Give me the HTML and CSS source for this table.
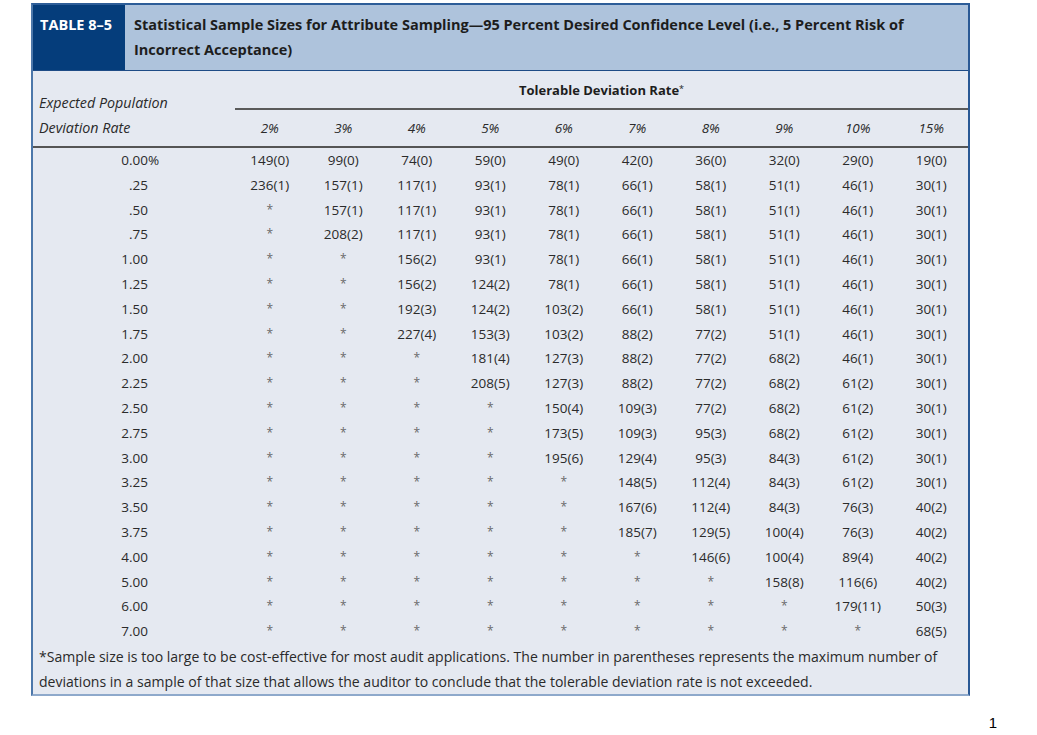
FILE: index.html
```html
<!DOCTYPE html>
<html lang="en">
<head>
<meta charset="utf-8">
<title>Table 8-5</title>
<link rel="stylesheet" href="styles.css">
</head>
<body>
<div class="page">
  <div class="tbl">
    <div class="head">
      <div class="tag">TABLE 8–5</div>
      <div class="title">Statistical Sample Sizes for Attribute Sampling—95 Percent Desired Confidence Level (i.e., 5 Percent Risk of<br>Incorrect Acceptance)</div>
    </div>
    <div class="colhead">
      <div class="rowlabel">Expected Population<br>Deviation Rate</div>
      <div class="tdr">Tolerable Deviation Rate<span class="sup">*</span></div>
      <div class="pct">2%</div><div class="pct">3%</div><div class="pct">4%</div><div class="pct">5%</div><div class="pct">6%</div><div class="pct">7%</div><div class="pct">8%</div><div class="pct">9%</div><div class="pct">10%</div><div class="pct">15%</div>
    </div>
    <div class="rows">
      <div class="row"><span class="rate">0.00<span class="pc">%</span></span><span>149(0)</span><span>99(0)</span><span>74(0)</span><span>59(0)</span><span>49(0)</span><span>42(0)</span><span>36(0)</span><span>32(0)</span><span>29(0)</span><span>19(0)</span></div>
      <div class="row"><span class="rate">.25</span><span>236(1)</span><span>157(1)</span><span>117(1)</span><span>93(1)</span><span>78(1)</span><span>66(1)</span><span>58(1)</span><span>51(1)</span><span>46(1)</span><span>30(1)</span></div>
      <div class="row"><span class="rate">.50</span><span class="ast">*</span><span>157(1)</span><span>117(1)</span><span>93(1)</span><span>78(1)</span><span>66(1)</span><span>58(1)</span><span>51(1)</span><span>46(1)</span><span>30(1)</span></div>
      <div class="row"><span class="rate">.75</span><span class="ast">*</span><span>208(2)</span><span>117(1)</span><span>93(1)</span><span>78(1)</span><span>66(1)</span><span>58(1)</span><span>51(1)</span><span>46(1)</span><span>30(1)</span></div>
      <div class="row"><span class="rate">1.00</span><span class="ast">*</span><span class="ast">*</span><span>156(2)</span><span>93(1)</span><span>78(1)</span><span>66(1)</span><span>58(1)</span><span>51(1)</span><span>46(1)</span><span>30(1)</span></div>
      <div class="row"><span class="rate">1.25</span><span class="ast">*</span><span class="ast">*</span><span>156(2)</span><span>124(2)</span><span>78(1)</span><span>66(1)</span><span>58(1)</span><span>51(1)</span><span>46(1)</span><span>30(1)</span></div>
      <div class="row"><span class="rate">1.50</span><span class="ast">*</span><span class="ast">*</span><span>192(3)</span><span>124(2)</span><span>103(2)</span><span>66(1)</span><span>58(1)</span><span>51(1)</span><span>46(1)</span><span>30(1)</span></div>
      <div class="row"><span class="rate">1.75</span><span class="ast">*</span><span class="ast">*</span><span>227(4)</span><span>153(3)</span><span>103(2)</span><span>88(2)</span><span>77(2)</span><span>51(1)</span><span>46(1)</span><span>30(1)</span></div>
      <div class="row"><span class="rate">2.00</span><span class="ast">*</span><span class="ast">*</span><span class="ast">*</span><span>181(4)</span><span>127(3)</span><span>88(2)</span><span>77(2)</span><span>68(2)</span><span>46(1)</span><span>30(1)</span></div>
      <div class="row"><span class="rate">2.25</span><span class="ast">*</span><span class="ast">*</span><span class="ast">*</span><span>208(5)</span><span>127(3)</span><span>88(2)</span><span>77(2)</span><span>68(2)</span><span>61(2)</span><span>30(1)</span></div>
      <div class="row"><span class="rate">2.50</span><span class="ast">*</span><span class="ast">*</span><span class="ast">*</span><span class="ast">*</span><span>150(4)</span><span>109(3)</span><span>77(2)</span><span>68(2)</span><span>61(2)</span><span>30(1)</span></div>
      <div class="row"><span class="rate">2.75</span><span class="ast">*</span><span class="ast">*</span><span class="ast">*</span><span class="ast">*</span><span>173(5)</span><span>109(3)</span><span>95(3)</span><span>68(2)</span><span>61(2)</span><span>30(1)</span></div>
      <div class="row"><span class="rate">3.00</span><span class="ast">*</span><span class="ast">*</span><span class="ast">*</span><span class="ast">*</span><span>195(6)</span><span>129(4)</span><span>95(3)</span><span>84(3)</span><span>61(2)</span><span>30(1)</span></div>
      <div class="row"><span class="rate">3.25</span><span class="ast">*</span><span class="ast">*</span><span class="ast">*</span><span class="ast">*</span><span class="ast">*</span><span>148(5)</span><span>112(4)</span><span>84(3)</span><span>61(2)</span><span>30(1)</span></div>
      <div class="row"><span class="rate">3.50</span><span class="ast">*</span><span class="ast">*</span><span class="ast">*</span><span class="ast">*</span><span class="ast">*</span><span>167(6)</span><span>112(4)</span><span>84(3)</span><span>76(3)</span><span>40(2)</span></div>
      <div class="row"><span class="rate">3.75</span><span class="ast">*</span><span class="ast">*</span><span class="ast">*</span><span class="ast">*</span><span class="ast">*</span><span>185(7)</span><span>129(5)</span><span>100(4)</span><span>76(3)</span><span>40(2)</span></div>
      <div class="row"><span class="rate">4.00</span><span class="ast">*</span><span class="ast">*</span><span class="ast">*</span><span class="ast">*</span><span class="ast">*</span><span class="ast">*</span><span>146(6)</span><span>100(4)</span><span>89(4)</span><span>40(2)</span></div>
      <div class="row"><span class="rate">5.00</span><span class="ast">*</span><span class="ast">*</span><span class="ast">*</span><span class="ast">*</span><span class="ast">*</span><span class="ast">*</span><span class="ast">*</span><span>158(8)</span><span>116(6)</span><span>40(2)</span></div>
      <div class="row"><span class="rate">6.00</span><span class="ast">*</span><span class="ast">*</span><span class="ast">*</span><span class="ast">*</span><span class="ast">*</span><span class="ast">*</span><span class="ast">*</span><span class="ast">*</span><span>179(11)</span><span>50(3)</span></div>
      <div class="row"><span class="rate">7.00</span><span class="ast">*</span><span class="ast">*</span><span class="ast">*</span><span class="ast">*</span><span class="ast">*</span><span class="ast">*</span><span class="ast">*</span><span class="ast">*</span><span class="ast">*</span><span>68(5)</span></div>
    </div>
    <div class="note">*Sample size is too large to be cost-effective for most audit applications. The number in parentheses represents the maximum number of<br>deviations in a sample of that size that allows the auditor to conclude that the tolerable deviation rate is not exceeded.</div>
  </div>
  <div class="pageno">1</div>
</div>
</body>
</html>
```

FILE: styles.css
```css
html, body {
  margin: 0;
  padding: 0;
  background: #ffffff;
}

.page {
  padding: 3px 0 0 31px;
  font-family: "Open Sans", Lato, sans-serif;
  color: #2a2a2a;
}

.tbl {
  width: 939px;
  box-sizing: border-box;
  background: #e5e9f1;
  border-top: 2px solid #2d5d98;
  border-left: 2px solid #4c77aa;
  border-right: 2px solid #2a5995;
  border-bottom: 2px solid #8ea9cb;
}

.head {
  display: flex;
  height: 65px;
  border-bottom: 1px solid #1e4b86;
}

.tag {
  width: 92px;
  box-sizing: border-box;
  background: #053d7b;
  color: #ffffff;
  font-weight: 700;
  font-size: 14.5px;
  line-height: 25px;
  padding: 6.5px 0 0 7px;
  white-space: nowrap;
}

.title {
  flex: 1;
  background: #aec3dc;
  color: #1d1d1d;
  font-weight: 700;
  font-size: 14.5px;
  line-height: 25px;
  padding: 6.5px 0 0 9px;
  white-space: nowrap;
}

.colhead {
  display: grid;
  grid-template-columns: 200px repeat(10, 73.5px);
  grid-template-rows: 39px 36px;
  border-bottom: 2px solid #555555;
}

.rowlabel {
  grid-column: 1;
  grid-row: 1 / 3;
  align-self: end;
  padding: 0 0 6px 6px;
  font-style: italic;
  font-size: 14.3px;
  line-height: 24.5px;
  color: #2a2a2a;
}

.tdr {
  grid-column: 2 / 12;
  grid-row: 1;
  box-sizing: border-box;
  border-bottom: 2px solid #5a5a5a;
  margin-left: 2px;
  padding-bottom: 2px;
  text-align: center;
  font-weight: 700;
  font-size: 13px;
  line-height: 35px;
  color: #1d1d1d;
}

.sup {
  font-size: 9px;
  vertical-align: 3px;
  font-weight: 400;
}

.pct {
  grid-row: 2;
  text-align: center;
  font-style: italic;
  font-size: 13.5px;
  line-height: 36px;
}

.row {
  display: grid;
  grid-template-columns: 200px repeat(10, 73.5px);
  line-height: 24.8px;
  font-size: 13.5px;
  color: #2b2b2b;
}

.row > span {
  text-align: center;
}

.row > .rate {
  text-align: right;
  padding-right: 85px;
}

.pc {
  display: inline-block;
  width: 0;
  overflow: visible;
}

.row > .ast {
  font-size: 12px;
  color: #6a6a6a;
}

.note {
  padding-left: 6px;
  font-size: 14.05px;
  line-height: 25px;
  color: #2a2a2a;
  white-space: nowrap;
}

.pageno {
  margin-top: 17px;
  padding-right: 40px;
  text-align: right;
  font-family: "Liberation Sans", Arial, sans-serif;
  font-size: 15px;
  line-height: 20px;
  color: #000000;
}
```
